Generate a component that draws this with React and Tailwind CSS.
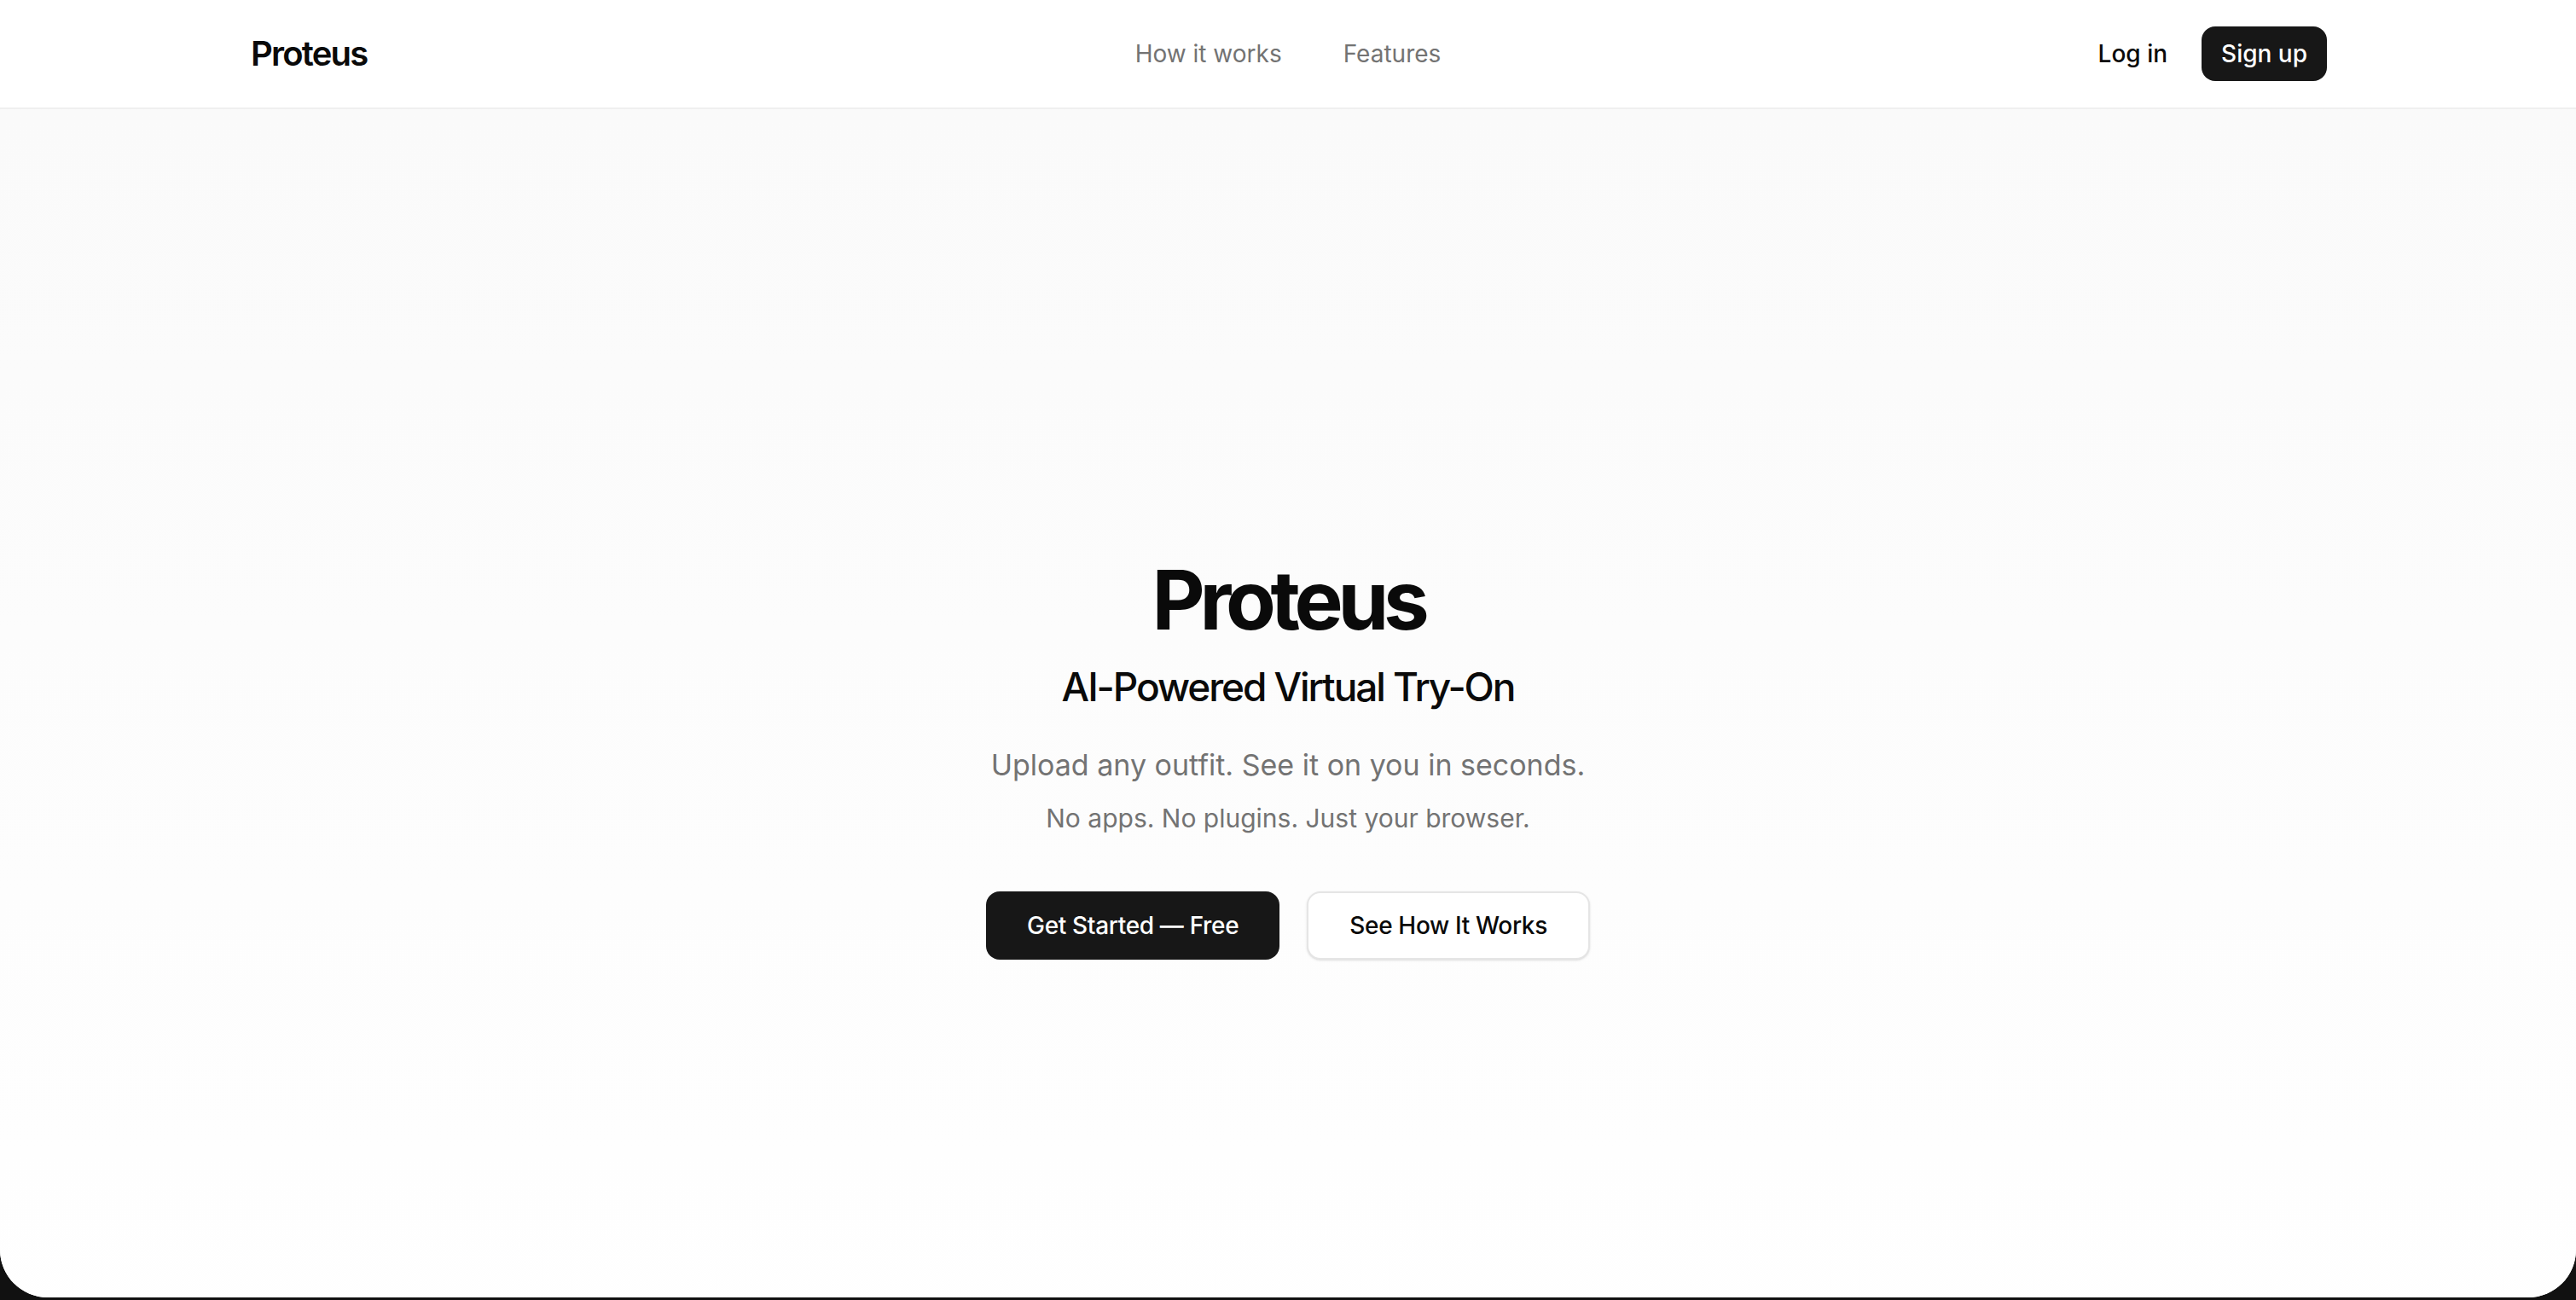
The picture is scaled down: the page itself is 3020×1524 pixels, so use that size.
import React from 'react';

const font = { fontFamily: 'Inter, "Noto Sans", sans-serif' };

const Header = () => (
  <header className="h-[128px] bg-white border-b-2 border-[#efefef]">
    <div className="max-w-[2560px] mx-auto px-[62px] h-full grid grid-cols-3 items-center">
      <div className="text-[40px] font-semibold tracking-[-0.045em] text-[#0a0a0a] pl-[2px]">Proteus</div>
      <nav className="flex justify-center gap-[72px] text-[28px] text-neutral-500">
        <a href="#how">How it works</a>
        <a href="#features">Features</a>
      </nav>
      <div className="flex justify-end items-center gap-[40px]">
        <button className="text-[28px] font-medium text-[#0a0a0a]">Log in</button>
        <button className="h-[64px] px-[23px] rounded-[16px] bg-[#171717] text-white text-[28px] font-medium">
          Sign up
        </button>
      </div>
    </div>
  </header>
);

const Hero = () => (
  <section className="min-h-screen flex items-center justify-center bg-linear-to-b from-[#fafafa] to-white">
    <div className="flex flex-col items-center text-center">
      <h1 className="text-[96px] leading-none font-bold tracking-[-0.065em] text-[#0a0a0a]">Proteus</h1>
      <h2 className="mt-[24px] text-[46px] leading-[60px] font-medium tracking-[-0.045em] text-[#0a0a0a]">
        AI-Powered Virtual Try-On
      </h2>
      <p className="mt-[38px] text-[34px] leading-[48px] text-neutral-500">
        Upload any outfit. See it on you in seconds.
      </p>
      <p className="mt-[16px] text-[30px] leading-[44px] text-neutral-500">
        No apps. No plugins. Just your browser.
      </p>
      <div className="mt-[64px] flex gap-[32px]">
        <button className="h-[80px] px-[48px] rounded-[16px] bg-[#171717] text-white text-[28px] font-medium tracking-[-0.012em]">
          Get Started — Free
        </button>
        <button className="h-[80px] px-[48px] rounded-[16px] bg-white border-2 border-[#e5e5e5] shadow-sm text-[#0a0a0a] text-[28px] font-medium tracking-[-0.012em]">
          See How It Works
        </button>
      </div>
    </div>
  </section>
);

export default function App() {
  return (
    <div className="h-screen bg-[#111] overflow-hidden" style={font}>
      <div className="h-[calc(100vh-3px)] rounded-b-[56px] overflow-hidden bg-white">
        <Header />
        <Hero />
      </div>
    </div>
  );
}
